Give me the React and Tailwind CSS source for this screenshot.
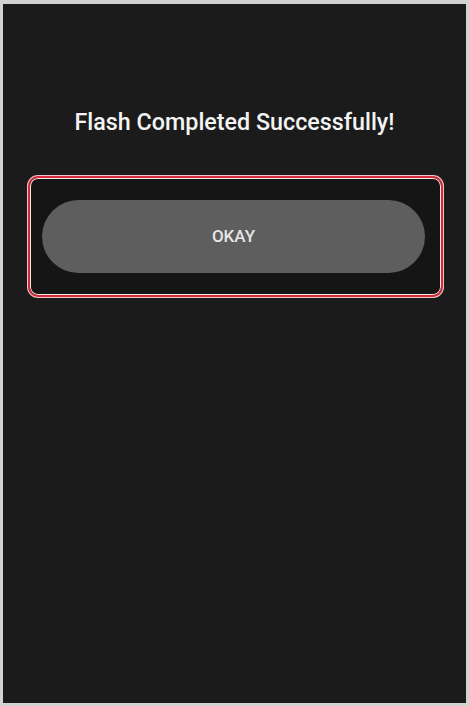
export default function App() {
  return (
    <div className="w-[469px] h-[706px] bg-[#d2d2d2] pt-[4px] pl-[3px] pr-[3px] pb-[3px]" style={{ fontFamily: "Roboto, 'Noto Sans', sans-serif" }}>
      <div className="h-full bg-[#1b1b1b] flex flex-col items-center">
        <h1 className="mt-[104px] text-[23.3px] leading-[28px] font-medium text-[#f4f4f4]">
          Flash Completed Successfully!
        </h1>
        <div className="mt-[40px] ml-[2px] w-[415px] h-[121px] rounded-[10px] border-2 border-[#d22a38] shadow-[0_0_0_1px_#eec4c8,inset_0_0_0_1px_#f6e8e8] bg-[#151515] flex items-center justify-center">
          <button className="w-[383px] h-[73px] rounded-full bg-[#5e5e5e] text-[17px] font-medium text-[#e6e6e6] mr-[4px]">
            OKAY
          </button>
        </div>
      </div>
    </div>
  );
}
